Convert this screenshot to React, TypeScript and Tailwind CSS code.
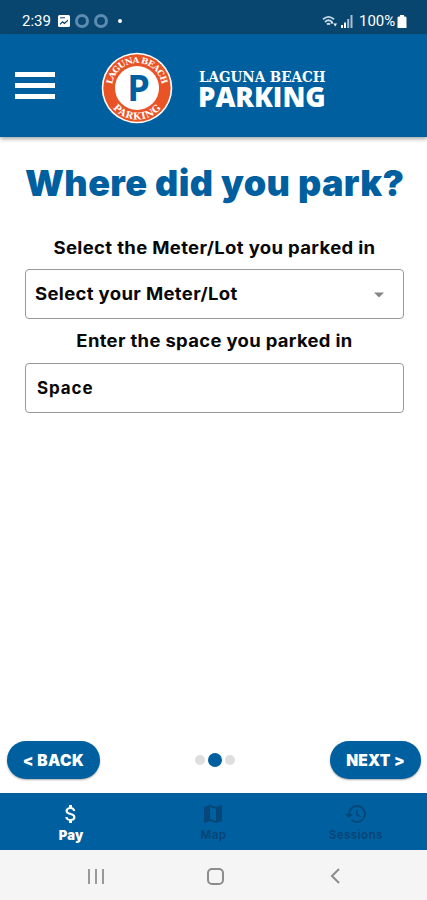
import type { ReactNode } from "react";
import { MdAttachMoney, MdHistory, MdMap } from "react-icons/md";

function StatusBar() {
  return (
    <div className="flex h-[34px] items-center justify-between bg-[#09466f] pt-[8px] pr-[20px] pl-[22px] font-['Roboto',sans-serif] text-white">
      <div className="flex items-center">
        <span className="w-[30px] text-[15px] leading-none">2:39</span>
        <svg className="ml-[6px]" width="12" height="12" viewBox="0 0 12 12">
          <rect width="12" height="12" rx="1.500" fill="#fff" />
          <path d="M2 10V8.500L4.500 6l2 1.500L10 4.500V6L6.500 9.200l-2-1.500z" fill="#09466f" />
          <path d="M2 2.800h5" stroke="#09466f" strokeWidth="1" />
        </svg>
        <span className="ml-[5px] size-[14px] rounded-full border-[3px] border-[#5c8cb0]" />
        <span className="ml-[5px] size-[14px] rounded-full border-[3px] border-[#5c8cb0]" />
        <span className="ml-[10px] size-[4px] rounded-full bg-white" />
      </div>
      <div className="flex items-center">
        <svg width="16" height="13" viewBox="0 0 16 13" fill="none">
          <path
            d="M1 4.200Q6.500 -.5 12 4.200M3 7Q6.500 3.500 10 7M5 9.500Q6.500 8 8 9.500"
            stroke="#c4d7e5"
            strokeWidth="1.800"
          />
          <path d="M8.500 8.500h3L10 6zM11.500 8.500h3.500L13.200 11.500z" fill="#fff" />
        </svg>
        <svg className="ml-[3px]" width="12" height="13" viewBox="0 0 12 13">
          <path d="M0 10h2v3H0zM3 7.500h2V13H3z" fill="#fff" />
          <path d="M6.200 4h2v9h-2zM9.500 0h2v13h-2z" fill="#a5c0d4" />
        </svg>
        <span className="ml-[6px] w-[37px] text-[15px] leading-none whitespace-nowrap">
          100%
        </span>
        <svg className="ml-[1px]" width="10" height="13" viewBox="0 0 10 13">
          <path d="M3 0h4v1.500h1.500l1 1V13h-9V2.500l1-1H3z" fill="#fff" />
        </svg>
      </div>
    </div>
  );
}

function Logo() {
  return (
    <svg
      className="ml-[46px]"
      width="72"
      height="72"
      viewBox="0 0 72 72"
      fontFamily="'DejaVu Serif', serif"
      fontWeight="700"
      fill="#fff"
    >
      <circle cx="36" cy="36" r="35.300" />
      <circle cx="36" cy="36" r="33.700" fill="#e95427" />
      <circle cx="36" cy="36" r="22" />
      <path id="badge-top" d="M11 36a25 25 0 0 1 50 0" fill="none" />
      <path id="badge-bottom" d="M4.500 36a31.500 31.500 0 0 0 63 0" fill="none" />
      <text fontSize="8.500" textAnchor="middle">
        <textPath href="#badge-top" startOffset="50%" textLength="71">
          LAGUNA BEACH
        </textPath>
      </text>
      <text fontSize="9.500" textAnchor="middle">
        <textPath href="#badge-bottom" startOffset="50%" textLength="55">
          PARKING
        </textPath>
      </text>
      <text
        x="37.500"
        y="48.500"
        textAnchor="middle"
        fontFamily="'Open Sans', sans-serif"
        fontSize="36"
        fill="#00609f"
      >
        P
      </text>
    </svg>
  );
}

function Header() {
  return (
    <header className="z-10 flex h-[103px] items-center bg-[#00609f] pt-[5px] pl-[15px] shadow-[0_2px_4px_rgba(0,0,0,0.35)]">
      <button aria-label="Menu" className="-mt-[5px] flex flex-col gap-[6px]">
        <span className="h-[5px] w-[40px] bg-white" />
        <span className="h-[5px] w-[40px] bg-white" />
        <span className="h-[5px] w-[40px] bg-white" />
      </button>
      <Logo />
      <div className="ml-[25px] flex flex-col text-white">
        <span className="ml-[1px] origin-left scale-x-[0.965] font-['DejaVu_Serif',serif] text-[14px] leading-[17px] font-bold whitespace-nowrap">
          LAGUNA BEACH
        </span>
        <span className="font-['Open_Sans',sans-serif] text-[27.5px] leading-[22px] font-extrabold whitespace-nowrap">
          PARKING
        </span>
      </div>
    </header>
  );
}

type NavItemProps = {
  icon: ReactNode;
  label: string;
  active?: boolean;
};

function NavItem({ icon, label, active }: NavItemProps) {
  return (
    <button
      className={`flex flex-1 flex-col items-center pt-[9px] leading-none ${
        active
          ? "text-[13px] font-black tracking-[0.3px] text-white"
          : "text-[11.5px] font-bold tracking-[0.4px] text-[#064678]"
      }`}
    >
      {icon}
      <span className="mt-[2px] h-[14px] leading-[14px]">{label}</span>
    </button>
  );
}

export default function App() {
  return (
    <div className="flex h-[900px] w-[427px] flex-col overflow-hidden bg-white font-['Inter',sans-serif]">
      <StatusBar />
      <Header />

      <main className="flex flex-1 flex-col pr-[23px] pl-[25px] text-[17px] font-bold tracking-[0.3px] text-[#080808]">
        <h1 className="mt-[24px] text-center text-[36px] leading-[44px] font-black tracking-[0.4px] whitespace-nowrap text-[#00609f]">
          Where did you park?
        </h1>
        <p className="mt-[31px] scale-x-[1.09] text-center leading-[24px]">
          Select the Meter/Lot you parked in
        </p>
        <button className="mt-[9px] flex h-[50px] items-center justify-between rounded-[4px] border border-[#999] pt-[1px] pr-[18px] pl-[9px]">
          <span className="origin-left scale-x-[1.09]">
            Select your Meter/Lot
          </span>
          <svg width="12" height="6" viewBox="0 0 12 6">
            <path d="M1 .5h10l-5 5z" fill="#858585" />
          </svg>
        </button>
        <p className="mt-[10px] scale-x-[1.085] pt-[1px] text-center leading-[23px]">
          Enter the space you parked in
        </p>
        <input
          className="mt-[10px] h-[50px] rounded-[4px] border border-[#999] px-[11px] tracking-[0.9px] outline-none placeholder:text-[#080808] placeholder:opacity-100"
          placeholder="Space"
        />
      </main>

      <div className="flex h-[52px] items-start justify-between pr-[6px] pl-[7px] text-[15.5px] font-black text-white">
        <button className="h-[38px] w-[93px] rounded-full bg-[#00609f] pt-[1px] tracking-[0.4px] shadow-[0_1px_2px_rgba(0,0,0,0.35)]">
          &lt; BACK
        </button>
        <div className="flex h-[38px] items-center">
          <span className="size-[10px] rounded-full bg-[#dedede]" />
          <span className="mx-[3px] size-[14px] rounded-full bg-[#00609f]" />
          <span className="size-[10px] rounded-full bg-[#dedede]" />
        </div>
        <button className="h-[38px] w-[91px] rounded-full bg-[#00609f] pt-[1px] tracking-[0.2px] shadow-[0_1px_2px_rgba(0,0,0,0.35)]">
          NEXT &gt;
        </button>
      </div>

      <nav className="flex h-[57px] items-start bg-[#00609f]">
        <NavItem icon={<MdAttachMoney size={24} />} label="Pay" active />
        <NavItem icon={<MdMap size={24} />} label="Map" />
        <NavItem icon={<MdHistory size={24} />} label="Sessions" />
      </nav>

      <div className="flex h-[50px] items-center bg-[#f5f5f5] pt-[2px] pl-[88px]">
        <div className="flex w-[16px] justify-between">
          <span className="h-[15px] w-[2px] bg-[#999]" />
          <span className="h-[15px] w-[2px] bg-[#999]" />
          <span className="h-[15px] w-[2px] bg-[#999]" />
        </div>
        <span className="ml-[103px] h-[17px] w-[17px] rounded-[5px] border-2 border-[#8c8c8c]" />
        <svg
          className="ml-[106px]"
          width="10"
          height="16"
          viewBox="0 0 10 16"
          fill="none"
          stroke="#8c8c8c"
          strokeWidth="2"
        >
          <path d="M9 1 2 8l7 7" />
        </svg>
      </div>
    </div>
  );
}
